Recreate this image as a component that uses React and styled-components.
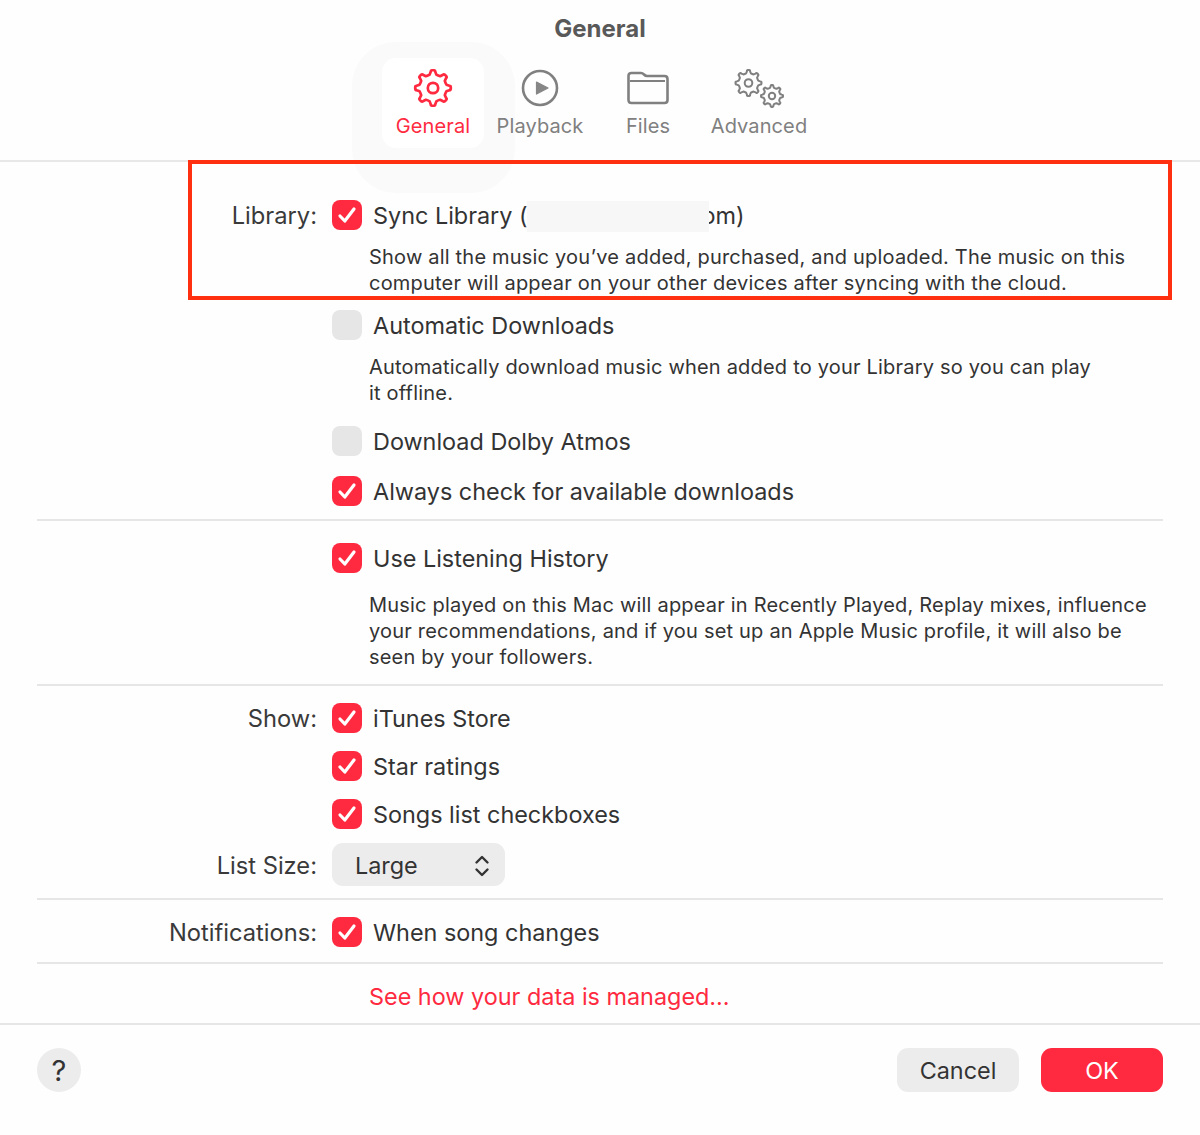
import React from "react";
import styled, { createGlobalStyle } from "styled-components";

const RED = "#ff2a40";

const Global = createGlobalStyle`
  html, body { margin: 0; padding: 0; background: #fefefe; }
  body { font-family: Inter, "Liberation Sans", sans-serif; color: #333; -webkit-font-smoothing: antialiased; }
`;

const Page = styled.div`
  position: relative;
  width: 1200px;
  height: 1135px;
  overflow: hidden;
  display: flex;
  flex-direction: column;
`;
const Halo = styled.div`
  position: absolute;
  left: 352px;
  top: 42px;
  width: 163px;
  height: 151px;
  border-radius: 44px;
  background: #fafafa;
`;
const Annotation = styled.div`
  position: absolute;
  left: 188px;
  top: 160px;
  width: 984px;
  height: 140px;
  box-sizing: border-box;
  border: 4px solid #ff3010;
  pointer-events: none;
`;
const Header = styled.header`
  position: relative;
  height: 160px;
  border-bottom: 2px solid #e8e8e8;
`;
const Title = styled.h1`
  margin: 0;
  height: 58px;
  padding-top: 14px;
  box-sizing: border-box;
  text-align: center;
  font-size: 24px;
  line-height: 30px;
  font-weight: 700;
  color: #595959;
`;
const Tabs = styled.nav`
  display: flex;
  justify-content: center;
`;
const Tab = styled.div`
  width: ${(p) => p.$w}px;
  height: 90px;
  box-sizing: border-box;
  display: flex;
  flex-direction: column;
  align-items: center;
  border-radius: 14px;
  background: ${(p) => (p.$active ? "#ffffff" : "transparent")};
  color: ${(p) => (p.$active ? RED : "#808080")};
`;
const TabIcon = styled.div`
  height: 55px;
  box-sizing: border-box;
  padding-top: 5px;
  display: flex;
  align-items: center;
  justify-content: center;
`;
const TabLabel = styled.span`
  font-size: 20px;
  line-height: 26px;
  letter-spacing: 0.1px;
  white-space: nowrap;
`;
const Main = styled.main`
  position: relative;
  padding: 0 37px;
  flex: 1;
`;
const Section = styled.section`
  padding-top: ${(p) => p.$top}px;
  padding-bottom: ${(p) => p.$bottom}px;
  border-bottom: ${(p) => (p.$plain ? "none" : "2px solid #e6e6e6")};
`;
const Row = styled.div`
  display: grid;
  grid-template-columns: 280px 1fr;
  column-gap: 15px;
  align-items: center;
  height: ${(p) => p.$h || 30}px;
  margin-top: ${(p) => p.$mt || 0}px;
`;
const FieldLabel = styled.label`
  display: block;
  height: 30px;
  text-align: right;
  font-size: 23.7px;
  line-height: 32px;
  color: #3a3a3a;
  white-space: nowrap;
`;
const Control = styled.div`
  display: flex;
  align-items: center;
  gap: 11px;
  height: 30px;
`;
const Box = styled.span`
  flex: none;
  width: 30px;
  height: 30px;
  border-radius: 8px;
  background: ${(p) => (p.$on ? RED : "#e6e6e6")};
  display: flex;
  align-items: center;
  justify-content: center;
`;
const CheckText = styled.span`
  display: block;
  height: 30px;
  font-size: 23.4px;
  line-height: 32px;
  color: #333;
  white-space: nowrap;
`;
const Redacted = styled.span`
  position: relative;
  display: inline-block;
  vertical-align: top;
  width: 182px;
  height: 31px;
  margin: 1px -7px 0 -1px;
  background: #f7f7f7;
`;
const Desc = styled.p`
  margin: ${(p) => p.$mt}px 0 0 332px;
  font-size: 20px;
  letter-spacing: 0.2px;
  line-height: 26px;
  color: #333;
  white-space: nowrap;
`;
const Select = styled.div`
  width: 173px;
  height: 43px;
  box-sizing: border-box;
  padding: 2px 15px 0 23px;
  border-radius: 11px;
  background: #ececec;
  display: flex;
  align-items: center;
  justify-content: space-between;
  font-size: 23.4px;
  color: #333;
`;
const DataLink = styled.a`
  display: block;
  margin-left: 332px;
  font-size: 23.4px;
  line-height: 30px;
  color: ${RED};
`;
const Footer = styled.footer`
  height: 112px;
  box-sizing: border-box;
  border-top: 2px solid #e6e6e6;
  padding: 23px 37px 0;
  display: flex;
  justify-content: space-between;
  align-items: flex-start;
`;
const Help = styled.button`
  width: 44px;
  height: 44px;
  padding: 0;
  border: 0;
  border-radius: 50%;
  background: #ececec;
  font: 400 29px/46px Inter, sans-serif;
  color: #333;
`;
const Actions = styled.div`
  display: flex;
  gap: 22px;
`;
const Button = styled.button`
  width: 122px;
  height: 44px;
  padding: 0;
  border: 0;
  border-radius: 11px;
  background: ${(p) => (p.$primary ? RED : "#ececec")};
  color: ${(p) => (p.$primary ? "#fff" : "#333")};
  font: 400 23.4px/46px Inter, sans-serif;
`;

function gearPath(cx, cy, ro, ri, n) {
  const pts = [];
  const step = (Math.PI * 2) / n;
  const p = (r, ang) => `${(cx + r * Math.cos(ang)).toFixed(2)} ${(cy + r * Math.sin(ang)).toFixed(2)}`;
  for (let i = 0; i < n; i++) {
    const a = i * step - Math.PI / 2;
    const t = step * 0.17;
    const b = step * 0.31;
    pts.push(`${i === 0 ? "M" : "L"}${p(ri, a - b)}`);
    pts.push(`L${p(ro - 1.2, a - t)}`);
    pts.push(`Q${p(ro, a - t)} ${p(ro, a - t * 0.4)}`);
    pts.push(`L${p(ro, a + t * 0.4)}`);
    pts.push(`Q${p(ro, a + t)} ${p(ro - 1.2, a + t)}`);
    pts.push(`L${p(ri, a + b)}`);
    pts.push(`Q${p(ri * 0.97, a + step / 2)} ${p(ri, a + step - b)}`);
  }
  return pts.join(" ") + "Z";
}

const Gear = ({ color }) => (
  <svg width="40" height="40" viewBox="0 0 40 40" fill="none" stroke={color} strokeWidth="2.7" strokeLinejoin="round">
    <path d={gearPath(20, 20, 17.8, 13.8, 8)} />
    <circle cx="20" cy="20" r="5.2" />
  </svg>
);
const Play = () => (
  <svg width="38" height="38" viewBox="0 0 38 38" fill="none">
    <circle cx="19" cy="19" r="17" stroke="#808080" strokeWidth="2.6" />
    <path d="M15.5 13 L27 19 L15.5 25 Z" fill="#868686" stroke="#868686" strokeWidth="1.2" strokeLinejoin="round" />
  </svg>
);
const Folder = () => (
  <svg width="42" height="34" viewBox="0 0 42 34" fill="none" stroke="#808080" strokeWidth="2.6" strokeLinejoin="round">
    <path d="M1.5 5 Q1.5 2 4.5 2 H14 Q15.5 2 17 3.5 Q18.5 5 20 5 H37.5 Q40.5 5 40.5 8 V29 Q40.5 32 37.5 32 H4.5 Q1.5 32 1.5 29 Z" />
    <path d="M3 10 H38" strokeWidth="2.2" />
  </svg>
);
const Gears = () => (
  <svg width="50" height="42" viewBox="0 0 50 42" fill="none" stroke="#808080" strokeWidth="2" strokeLinejoin="round">
    <path d={gearPath(14.5, 16, 13, 10, 8)} />
    <circle cx="14.5" cy="16" r="3.8" />
    <path d={gearPath(38, 29, 11, 8.4, 8)} />
    <circle cx="38" cy="29" r="3.2" />
  </svg>
);
const Tick = () => (
  <svg width="22" height="22" viewBox="0 0 22 22" fill="none" stroke="#fff" strokeWidth="3.2" strokeLinecap="round" strokeLinejoin="round">
    <path d="M4 12 L8.8 17 L18 5" />
  </svg>
);
const Chevrons = () => (
  <svg width="16" height="24" viewBox="0 0 16 24" fill="none" stroke="#333" strokeWidth="2.4" strokeLinecap="round" strokeLinejoin="round">
    <path d="M2.5 8.5 L8 3 L13.5 8.5" />
    <path d="M2.5 15.5 L8 21 L13.5 15.5" />
  </svg>
);

const Check = ({ on, children }) => (
  <Control>
    <Box $on={on}>{on && <Tick />}</Box>
    <CheckText>{children}</CheckText>
  </Control>
);

export default function App() {
  return (
    <Page>
      <Global />
      <Halo />
      <Header>
        <Title>General</Title>
        <Tabs>
          <Tab $w={102} $active>
            <TabIcon><Gear color={RED} /></TabIcon>
            <TabLabel>General</TabLabel>
          </Tab>
          <Tab $w={112}>
            <TabIcon><Play /></TabIcon>
            <TabLabel>Playback</TabLabel>
          </Tab>
          <Tab $w={104}>
            <TabIcon><Folder /></TabIcon>
            <TabLabel>Files</TabLabel>
          </Tab>
          <Tab $w={118}>
            <TabIcon><Gears /></TabIcon>
            <TabLabel>Advanced</TabLabel>
          </Tab>
        </Tabs>
      </Header>
      <Main>
        <Section $top={38} $bottom={13}>
          <Row>
            <FieldLabel>Library:</FieldLabel>
            <Check on>Sync Library (<Redacted />om)</Check>
          </Row>
          <Desc $mt={14}>
            Show all the music you’ve added, purchased, and uploaded. The music on this<br />
            computer will appear on your other devices after syncing with the cloud.
          </Desc>
          <Row $mt={14}>
            <span />
            <Check>Automatic Downloads</Check>
          </Row>
          <Desc $mt={14}>
            Automatically download music when added to your Library so you can play<br />
            it offline.
          </Desc>
          <Row $mt={20}>
            <span />
            <Check>Download Dolby Atmos</Check>
          </Row>
          <Row $mt={20}>
            <span />
            <Check on>Always check for available downloads</Check>
          </Row>
        </Section>
        <Section $top={22} $bottom={14}>
          <Row>
            <span />
            <Check on>Use Listening History</Check>
          </Row>
          <Desc $mt={19}>
            Music played on this Mac will appear in Recently Played, Replay mixes, influence<br />
            your recommendations, and if you set up an Apple Music profile, it will also be<br />
            seen by your followers.
          </Desc>
        </Section>
        <Section $top={17} $bottom={12}>
          <Row>
            <FieldLabel>Show:</FieldLabel>
            <Check on>iTunes Store</Check>
          </Row>
          <Row $mt={18}>
            <span />
            <Check on>Star ratings</Check>
          </Row>
          <Row $mt={18}>
            <span />
            <Check on>Songs list checkboxes</Check>
          </Row>
          <Row $mt={14} $h={43}>
            <FieldLabel>List Size:</FieldLabel>
            <Select>
              Large
              <Chevrons />
            </Select>
          </Row>
        </Section>
        <Section $top={17} $bottom={15}>
          <Row>
            <FieldLabel>Notifications:</FieldLabel>
            <Check on>When song changes</Check>
          </Row>
        </Section>
        <Section $top={18} $plain>
          <DataLink>See how your data is managed...</DataLink>
        </Section>
      </Main>
      <Footer>
        <Help>?</Help>
        <Actions>
          <Button>Cancel</Button>
          <Button $primary>OK</Button>
        </Actions>
      </Footer>
      <Annotation />
    </Page>
  );
}
